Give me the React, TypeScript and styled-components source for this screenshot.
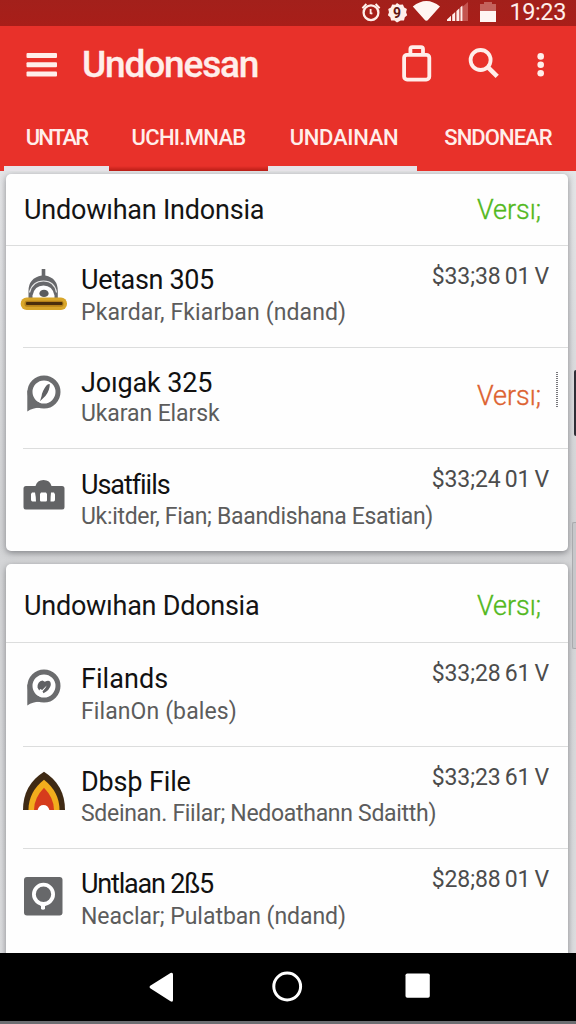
import React from "react";
import styled, { createGlobalStyle } from "styled-components";

const GlobalStyle = createGlobalStyle`
  * { box-sizing: border-box; }
  body { margin: 0; background: #000; font-family: Roboto, "Liberation Sans", sans-serif; }
`;

const Screen = styled.div`
  position: relative;
  width: 576px;
  height: 1024px;
  display: flex;
  flex-direction: column;
  overflow: hidden;
  background: #d9dadc;
`;

const StatusBar = styled.div`
  flex: none;
  height: 26px;
  display: flex;
  align-items: flex-start;
  justify-content: flex-end;
  padding-right: 10px;
  background: linear-gradient(#a3201b, #a81e19);
`;

const Clock = styled.span`
  margin-left: 10px;
  font-size: 23.5px;
  line-height: 25px;
  letter-spacing: -0.4px;
  color: #ffeeea;
`;

const Header = styled.header`
  flex: none;
  height: 145px;
  display: flex;
  flex-direction: column;
  background: #e8312a;
  color: #ffeeea;
`;

const AppBar = styled.div`
  height: 78px;
  display: flex;
  align-items: center;
  padding: 0 25px 0 26px;
`;

const AppTitle = styled.h1`
  flex: 1;
  margin: 0 0 0 24px;
  font-size: 37px;
  line-height: 44px;
  font-weight: 500;
  letter-spacing: -1.15px;
  -webkit-text-stroke: 0.3px currentColor;
`;

const Actions = styled.div`
  display: flex;
  align-items: center;
`;

const Tabs = styled.nav`
  flex: 1;
  display: flex;
  padding-left: 4px;
`;

const Tab = styled.div<{ $width: number; $active?: boolean; $shade?: boolean; $tracking: number; $shift?: number }>`
  width: ${(p) => p.$width}px;
  padding: 21px 0 0 ${(p) => p.$shift ?? 0}px;
  text-align: center;
  white-space: nowrap;
  font-size: 22px;
  line-height: 26px;
  font-weight: 500;
  letter-spacing: ${(p) => p.$tracking}px;
  border-bottom: 5px solid ${(p) => (p.$active ? "#e6e3e8" : "transparent")};
  box-shadow: ${(p) => (p.$active ? "0 1px 0 #aeb3bb" : "none")};
  background: ${(p) =>
    p.$shade ? "linear-gradient(transparent, #b81d16) bottom / 100% 5px no-repeat border-box" : "none"};
`;

const Content = styled.main`
  flex: 1;
  min-height: 0;
  overflow: hidden;
  padding: 3px 8px 0 6px;
  display: flex;
  flex-direction: column;
  gap: 13px;
  background: linear-gradient(#e4e5e7, #d3d4d6 45%, #dcdddf);
`;

const Card = styled.section`
  flex: none;
  border-radius: 5px;
  background: #fefefe;
  box-shadow: 0 2px 6px rgba(50, 52, 58, 0.5);
`;

const CardHeader = styled.div<{ $height: number; $drop: number }>`
  height: ${(p) => p.$height}px;
  display: flex;
  align-items: center;
  justify-content: space-between;
  padding: ${(p) => p.$drop}px 27px 0 18px;
  border-bottom: 1px solid #dcdddd;
`;

const CardTitle = styled.h2<{ $tracking: number }>`
  margin: 0;
  font-size: 27px;
  line-height: 32px;
  font-weight: 400;
  letter-spacing: ${(p) => p.$tracking}px;
  color: #141414;
`;

const Status = styled.span<{ $tone: "green" | "orange" }>`
  font-size: 27px;
  line-height: 32px;
  font-weight: 300;
  -webkit-text-stroke: 0.35px currentColor;
  color: ${(p) => (p.$tone === "green" ? "#52b81c" : "#dd6230")};
`;

const Item = styled.article<{ $height: number }>`
  position: relative;
  height: ${(p) => p.$height}px;
  display: grid;
  grid-template-columns: 61px 1fr auto;
  grid-template-rows: 35px 30px;
  padding: 16px 19px 0 14px;

  &:not(:last-child)::after {
    content: "";
    position: absolute;
    left: 17px;
    right: 0;
    bottom: 0;
    height: 1px;
    background: #dcdddd;
  }
`;

const IconCell = styled.div`
  grid-row: 1 / 3;
  padding-top: 4px;

  svg {
    display: block;
  }
`;

const Name = styled.h3<{ $tracking: number; $drop: number }>`
  grid-column: 2;
  grid-row: 1;
  margin: ${(p) => 3 + p.$drop}px 0 0;
  font-size: 27px;
  line-height: 32px;
  font-weight: 400;
  white-space: nowrap;
  letter-spacing: ${(p) => p.$tracking}px;
  color: #111;
`;

const Detail = styled.p<{ $tracking: number; $drop: number }>`
  grid-column: 2 / 4;
  grid-row: 2;
  margin: ${(p) => p.$drop}px 0 0;
  font-size: 23px;
  line-height: 30px;
  white-space: nowrap;
  letter-spacing: ${(p) => p.$tracking}px;
  color: #5c5c5c;
`;

const Price = styled.span`
  grid-column: 3;
  grid-row: 1;
  font-size: 23px;
  line-height: 30px;
  letter-spacing: -0.1px;
  word-spacing: -1.5px;
  color: #4c4c4c;
`;

const ItemStatus = styled.div`
  grid-column: 3;
  grid-row: 1 / 3;
  padding: 16px 8px 0 0;
`;

const DragHandle = styled.span`
  position: absolute;
  top: 24px;
  right: 10px;
  width: 2px;
  height: 35px;
  background: repeating-linear-gradient(#77777b 0 1px, transparent 1px 2px);
`;

const NavBar = styled.footer`
  flex: none;
  height: 71px;
  display: flex;
  align-items: center;
  padding: 0 0 1px 148px;
  gap: 98px;
  background: #000;
  border-bottom: 3px solid #6c6d71;
`;

const ScrollMark = styled.span<{ $top: number; $height: number; $width: number; $dark?: boolean }>`
  position: absolute;
  right: 0;
  top: ${(p) => p.$top}px;
  width: ${(p) => p.$width}px;
  height: ${(p) => p.$height}px;
  border-radius: 2px 0 0 2px;
  background: ${(p) => (p.$dark ? "#2e2e36" : "#c6c7ca")};
  border: ${(p) => (p.$dark ? "none" : "1px solid #a9aaad")};
  border-right: none;
`;

const StatusIcons = () => (
  <svg width="138" height="26" viewBox="362 0 138 26">
    <g fill="none" stroke="#ffeeea" strokeWidth="2.3">
      <circle cx="372" cy="12.7" r="7.4" />
      <path d="M363.4 8.2l4-4.2M380.6 8.2l-4-4.2" strokeWidth="2" />
      <path d="M371.6 9v4.2l1.8.4" strokeWidth="1.8" />
    </g>
    <path
      fill="#ffeeea"
      d="M398 3l2.7 1.7 3.2-.3 1.3 3 2.7 1.7-.8 3.1 1.1 3-2.4 2.1-.8 3.1-3.3.2L398 22.4l-2.6-1.8-3.3-.2-.8-3.1-2.4-2.1 1.1-3-.8-3.1 2.7-1.7 1.3-3 3.2.3z"
    />
    <text x="398" y="17.6" textAnchor="middle" fontSize="14" fontWeight="700" fill="#5f1713">9</text>
    <path fill="#fff6f3" d="M413.8 6.4Q427.4-4.6 441 6.4L429.4 19.6Q427.4 22 425.4 19.6z" />
    <path fill="#c4544f" d="M462 8l7-6v19h-7z" />
    <path fill="#ffeeea" d="M448 21v-1.6l4-3.6V21zM453.2 21v-6.2l3-2.700V21zM457.4 21V11l3-2.800V21zM461.400 21V7.300l2-1.800V21z" />
    <path fill="#c4625c" d="M481 4h4V2h8v2h4v7h-16z" />
    <path fill="#fff6f3" d="M481 11h16v11h-16z" />
  </svg>
);

const MenuIcon = () => (
  <svg width="32" height="28" viewBox="0 0 32 28">
    <g fill="currentColor">
      <rect x="0.5" y="2" width="30.5" height="5" rx="1" />
      <rect x="0.5" y="11.2" width="30.5" height="5" rx="1" />
      <rect x="0.5" y="20.4" width="30.5" height="5" rx="1" />
    </g>
  </svg>
);

const ActionIcons = () => (
  <svg width="150" height="44" viewBox="401 43 150 44">
    <g fill="none" stroke="currentColor" strokeWidth="3.8">
      <rect x="404.1" y="54.8" width="25.2" height="24.8" rx="3" />
      <path d="M410.4 54.8v-5.700q0-2 2-2h8.600q2 0 2 2v5.700" />
      <circle cx="480.6" cy="60" r="10" />
      <path d="M487.8 67.2l9.4 9.2" strokeWidth="4.6" />
    </g>
    <g fill="currentColor">
      <circle cx="540.7" cy="56.4" r="3.3" />
      <circle cx="540.7" cy="64.8" r="3.3" />
      <circle cx="540.7" cy="73.2" r="3.3" />
    </g>
  </svg>
);

const DomeIcon = () => (
  <svg width="50" height="50" viewBox="0 0 50 50">
    <path fill="#67686b" d="M21.7 3h3.600v6.500q12.500 2.500 12.500 15.500V32H8.500v-7q0-13 13.200-15.500z" />
    <path fill="none" stroke="#e8e8e8" strokeWidth="1.2" d="M9.500 26.500Q12.500 15 23.500 15T36.500 26.500" />
    <path fill="#fff" d="M12.500 32v-2.500Q14.500 19.500 23.500 19.500T34.500 29.500V32z" />
    <ellipse cx="24" cy="27.400" rx="4.600" ry="3.600" fill="#5a5b5e" />
    <rect x="0.700" y="31.500" width="46.300" height="12.500" rx="6" fill="#d8a62a" />
    <rect x="4.500" y="34.800" width="39" height="6" rx="2.500" fill="#b58219" />
    <rect x="6" y="35.900" width="36.500" height="3.200" rx="1" fill="#4a2f0c" />
  </svg>
);

const ChatShape = () => (
  <>
    <circle cx="24" cy="24" r="14" fill="#fff" stroke="#6b6c6e" strokeWidth="5" />
    <path fill="#6b6c6e" d="M7.300 43.500V22l4.500 6 2 4.500 5.200 2 1 5.300q-6.700-.3-12.700 3.700z" />
  </>
);

const PenChatIcon = () => (
  <svg width="50" height="50" viewBox="0 0 50 50">
    <ChatShape />
    <path fill="#606164" d="M29.800 16.200q-1.800-.6-3.600 1.600-4 5.500-4.600 10.200l-1.600 5.200 5.400-5.200q4.400-5.500 4.400-11.800z" />
  </svg>
);

const HeartChatIcon = () => (
  <svg width="50" height="50" viewBox="0 1 50 50">
    <ChatShape />
    <path fill="#606164" d="M17.500 25.500q-.2-6 5-7l2.300 1.200q6.200-2.700 6 3.300-1 5-7.300 8.300l-1-1.800q3.500-3.600 4.200-6l-4.500 4.500-2-1-1 1.500z" />
  </svg>
);

const HallIcon = () => (
  <svg width="50" height="50" viewBox="0 0 50 50">
    <path fill="#626365" d="M6 17h9.500q1.500-6 8-6t8 6H42q2.500 0 2.500 2.500V38q0 2.500-2.500 2.500H6Q3.500 40.500 3.500 38V19.500Q3.500 17 6 17z" />
    <path fill="#fff" d="M12 23.500H15q1 4.500 1 9h-3.500q-1.500 0-1.500-2v-5.500zM21 23.500h5l1 1.500v6.500l-.7 1h-5.600l-.7-1v-6.500zM31 23.500h3l1 2v5q0 2-1.500 2h-3q0-4.500.5-9z" />
  </svg>
);

const FlameIcon = () => (
  <svg width="50" height="50" viewBox="0 0 50 50">
    <path fill="#3f2a14" d="M24 4.800Q45 18 45 43H3Q3 18 24 4.800z" />
    <path fill="#f2ad1d" d="M24 12.800Q39.500 25 39.500 43H8.500Q8.500 25 24 12.800z" />
    <path fill="#d63c1c" d="M24 20.800Q34 31 34 43H14Q14 31 24 20.800z" />
    <path fill="#fff" d="M17.500 43.300Q19 38 23.500 38t6 5.300z" />
  </svg>
);

const PinIcon = () => (
  <svg width="50" height="50" viewBox="0 0 50 50">
    <rect x="4" y="8" width="38.500" height="38.500" rx="3" fill="#67686a" />
    <circle cx="23.500" cy="25.300" r="9.600" fill="none" stroke="#fff" strokeWidth="3.800" />
    <path fill="#fff" d="M18.500 34.500h9.500l-3 2.500v3q-2 1.500-4 0v-3z" />
  </svg>
);

type Entry = {
  icon: React.ReactNode;
  name: string;
  nameTracking: number;
  nameDrop?: number;
  detail: string;
  detailTracking: number;
  detailDrop: number;
  price?: string;
  height: number;
};

type Group = { title: string; tracking: number; headerHeight: number; headerDrop: number; entries: Entry[] };

const groups: Group[] = [
  {
    title: "Undowıhan Indonsia",
    tracking: -0.22,
    headerHeight: 72,
    headerDrop: 0,
    entries: [
      { icon: <DomeIcon />, name: "Uetasn 305", nameTracking: -0.35, nameDrop: -1, detail: "Pkardar, Fkiarban (ndand)", detailTracking: 0.12, detailDrop: 1, price: "$33;38 01 V", height: 102 },
      { icon: <PenChatIcon />, name: "Joıgak 325", nameTracking: -0.15, detail: "Ukaran Elarsk", detailTracking: -0.1, detailDrop: 0, height: 101 },
      { icon: <HallIcon />, name: "Usatfiils", nameTracking: -1.05, nameDrop: 1, detail: "Uk:itder, Fian; Baandishana Esatian)", detailTracking: -0.32, detailDrop: 2, price: "$33;24 01 V", height: 102 },
    ],
  },
  {
    title: "Undowıhan Ddonsia",
    tracking: -0.25,
    headerHeight: 79,
    headerDrop: 5,
    entries: [
      { icon: <HeartChatIcon />, name: "Filands", nameTracking: 0.05, nameDrop: 1, detail: "FilanOn (bales)", detailTracking: 0.1, detailDrop: 3, price: "$33;28 61 V", height: 104 },
      { icon: <FlameIcon />, name: "Dbsþ File", nameTracking: -0.2, detail: "Sdeinan. Fiilar; Nedoathann Sdaitth)", detailTracking: -0.3, detailDrop: 1, price: "$33;23 61 V", height: 102 },
      { icon: <PinIcon />, name: "Untlaan 2ß5", nameTracking: -1.2, detail: "Neaclar; Pulatban (ndand)", detailTracking: -0.04, detailDrop: 2, price: "$28;88 01 V", height: 112 },
    ],
  },
];

export default function App() {
  return (
    <Screen>
      <GlobalStyle />
      <StatusBar>
        <StatusIcons />
        <Clock>19:23</Clock>
      </StatusBar>
      <Header>
        <AppBar>
          <MenuIcon />
          <AppTitle>Undonesan</AppTitle>
          <Actions>
            <ActionIcons />
          </Actions>
        </AppBar>
        <Tabs>
          <Tab $width={105} $tracking={-1.8} $active>UNTAR</Tab>
          <Tab $width={159} $tracking={-0.7} $shade>UCHI.MNAB</Tab>
          <Tab $width={149} $tracking={-0.3} $shift={3} $active>UNDAINAN</Tab>
          <Tab $width={159} $tracking={-0.95} $shift={3}>SNDONEAR</Tab>
        </Tabs>
      </Header>
      <Content>
        {groups.map((group) => (
          <Card key={group.title}>
            <CardHeader $height={group.headerHeight} $drop={group.headerDrop}>
              <CardTitle $tracking={group.tracking}>{group.title}</CardTitle>
              <Status $tone="green">Versı;</Status>
            </CardHeader>
            {group.entries.map((entry) => (
              <Item key={entry.name} $height={entry.height}>
                <IconCell>{entry.icon}</IconCell>
                <Name $tracking={entry.nameTracking} $drop={entry.nameDrop ?? 0}>{entry.name}</Name>
                {entry.price ? (
                  <Price>{entry.price}</Price>
                ) : (
                  <ItemStatus>
                    <Status $tone="orange">Versı;</Status>
                    <DragHandle />
                  </ItemStatus>
                )}
                <Detail $tracking={entry.detailTracking} $drop={entry.detailDrop}>{entry.detail}</Detail>
              </Item>
            ))}
          </Card>
        ))}
      </Content>
      <NavBar>
        <svg width="26" height="32" viewBox="0 0 26 32">
          <path fill="#fff" d="M2.200 14.800L22.500 2Q25 1 25 3.500v25.500q0 2.500-2.500 1.200L2.200 17.200q-1.600-1.200 0-2.400z" />
        </svg>
        <svg width="31" height="31" viewBox="0 0 31 31">
          <circle cx="15.200" cy="15.500" r="13.400" fill="none" stroke="#fff" strokeWidth="3" />
        </svg>
        <svg width="31" height="31" viewBox="0 0 31 31">
          <rect x="4.500" y="2.500" width="24.300" height="24.300" rx="1.800" fill="#fff" />
        </svg>
      </NavBar>
      <ScrollMark $top={370} $height={66} $width={2} $dark />
      <ScrollMark $top={522} $height={127} $width={4} />
    </Screen>
  );
}
